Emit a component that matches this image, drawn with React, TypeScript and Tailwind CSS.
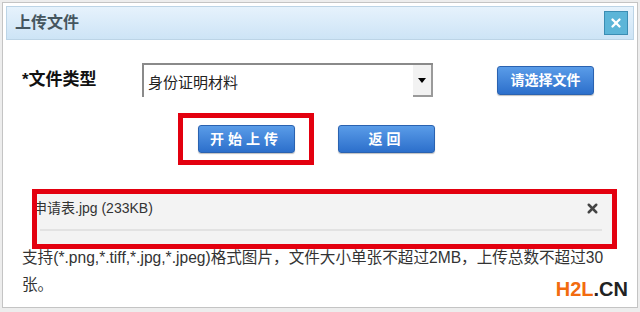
import { X } from "lucide-react";

const font = { fontFamily: '"Liberation Sans", "Noto Sans CJK SC", sans-serif' };

const btnClass =
  "inline-flex items-center justify-center rounded-[3px] border border-[#2a62b0] bg-gradient-to-b from-[#5a9ce8] to-[#2c6fcb] text-[14px] font-bold text-white shadow-[0_1px_1px_rgba(0,0,0,0.25)]";

export default function App() {
  return (
    <div className="h-[312px] w-[640px] overflow-hidden bg-[#ededed] pl-[2px] pt-[2px]" style={font}>
      <div className="relative h-[306px] w-[636px] border border-[#c4c4c4] bg-white p-[3px]">
        {/* title bar */}
        <div className="flex h-[34px] items-center justify-between border border-[#bcd4e6] bg-gradient-to-b from-[#e6f2fc] to-[#cde4f6] pl-[8px] pr-[5px]">
          <span className="text-[16px] font-bold text-[#45565f]">上传文件</span>
          <button
            type="button"
            className="flex h-[24px] w-[24px] items-center justify-center border border-[#3b8db3] bg-[#5cb5d8] text-white"
          >
            <X className="h-[14px] w-[14px]" strokeWidth={4} />
          </button>
        </div>

        {/* type row */}
        <div className="mt-[23px] flex h-[34px] items-center">
          <span className="w-[136px] pl-[16px] text-[17px] font-bold text-[#111]">*文件类型</span>
          <div className="flex h-[34px] w-[291px] border-l-2 border-t-2 border-[#8a8a8a] bg-white">
            <span className="flex flex-1 items-end pb-[3px] pl-[4px] text-[15px] text-[#222]">身份证明材料</span>
            <span className="flex w-[20px] items-center justify-center border-b-2 border-r-2 border-[#9a9a9a] bg-[#f2f2f2]">
              <span className="h-0 w-0 border-l-[4px] border-r-[4px] border-t-[5px] border-l-transparent border-r-transparent border-t-black" />
            </span>
          </div>
          <button type="button" className={`${btnClass} ml-[64px] h-[29px] w-[97px]`}>
            请选择文件
          </button>
        </div>

        {/* action row */}
        <div className="mt-[16px] flex items-center">
          <div className="ml-[172px] flex h-[52px] w-[136px] items-center justify-center border-[5px] border-[#e3000f]">
            <button type="button" className={`${btnClass} h-[28px] w-[97px] tracking-[4px]`}>
              开始上传
            </button>
          </div>
          <button type="button" className={`${btnClass} ml-[24px] h-[28px] w-[97px] tracking-[4px]`}>
            返回
          </button>
        </div>

        {/* file item */}
        <div className="relative ml-[26px] mt-[24px] h-[60px] w-[585px] bg-[#f3f3f3]">
          <div className="flex items-center justify-between pl-[1px] pr-[17px] pt-[9px]">
            <span className="text-[14px] text-[#333]">申请表.jpg (233KB)</span>
            <X className="h-[15px] w-[15px] text-[#444]" strokeWidth={4} />
          </div>
          <div className="ml-[8px] mt-[10px] h-[2px] w-[562px] bg-[#e2e2e2]" />
          <div className="pointer-events-none absolute inset-0 border-[5px] border-[#e3000f]" />
        </div>

        <p className="ml-[16px] mt-[-5px] text-[15.6px] leading-[27px] text-[#333]">
          支持(*.png,*.tiff,*.jpg,*.jpeg)格式图片，文件大小单张不超过2MB，上传总数不超过30
          <br />
          张。
        </p>

        <div className="absolute bottom-[8px] right-[9px] text-[20px] font-bold leading-none">
          <span className="text-[#f26b0f]">H2L</span>
          <span className="text-[#222]">.CN</span>
        </div>
      </div>
    </div>
  );
}
